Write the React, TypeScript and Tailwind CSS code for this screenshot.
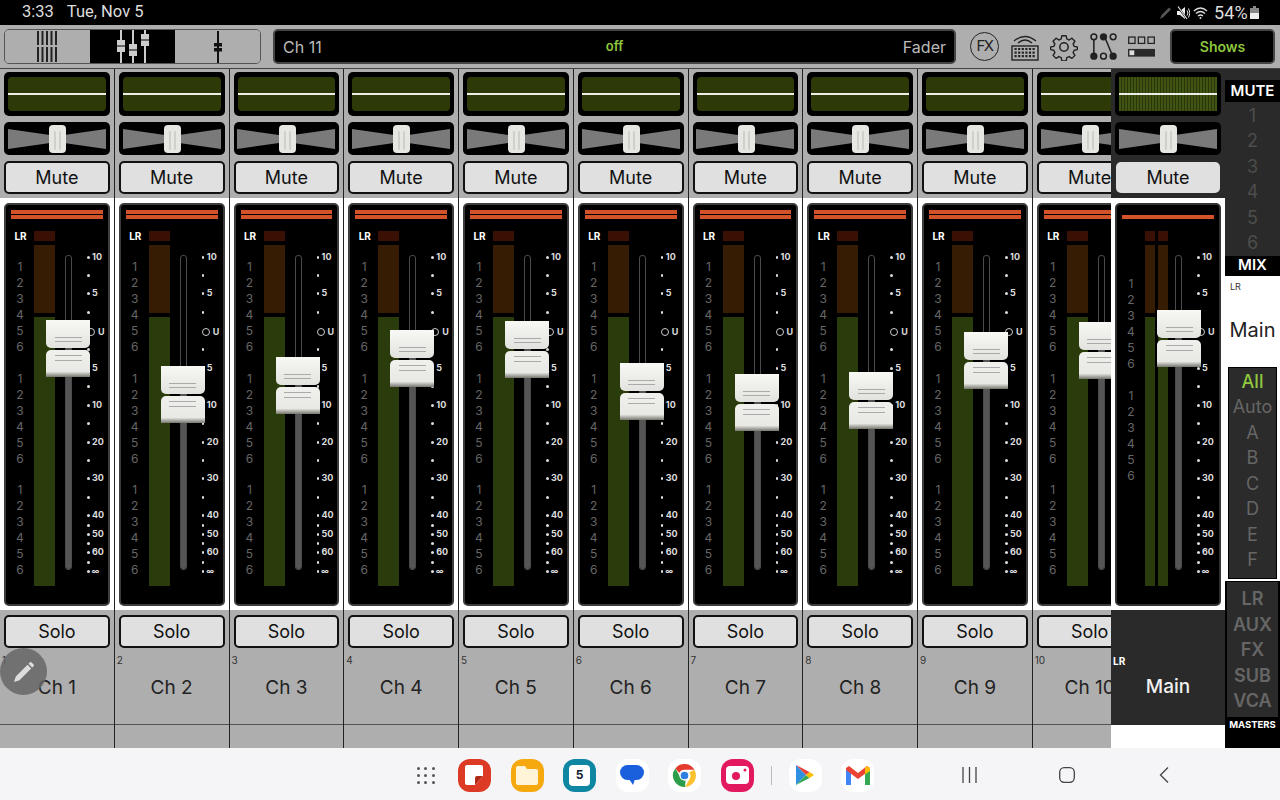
import type { ReactNode } from "react";

// y of the fader cap top for each channel
const channels = [
  { name: "Ch 1", cap: 320 },
  { name: "Ch 2", cap: 366 },
  { name: "Ch 3", cap: 357 },
  { name: "Ch 4", cap: 330 },
  { name: "Ch 5", cap: 321 },
  { name: "Ch 6", cap: 363 },
  { name: "Ch 7", cap: 374 },
  { name: "Ch 8", cap: 372 },
  { name: "Ch 9", cap: 332 },
  { name: "Ch 10", cap: 322 },
];

const scale: { y: number; label?: string }[] = [
  { y: 257, label: "10" },
  { y: 275 },
  { y: 293, label: "5" },
  { y: 312 },
  { y: 332, label: "U" },
  { y: 349 },
  { y: 368, label: "5" },
  { y: 386 },
  { y: 405, label: "10" },
  { y: 423 },
  { y: 442, label: "20" },
  { y: 460 },
  { y: 478, label: "30" },
  { y: 497 },
  { y: 515, label: "40" },
  { y: 525 },
  { y: 534, label: "50" },
  { y: 543 },
  { y: 552, label: "60" },
  { y: 562 },
  { y: 571, label: "∞" },
];

function Scale() {
  return (
    <div className="mt-[21px] flex flex-col">
      {scale.map((s, i) => (
        <div key={i} className="flex items-start" style={{ height: (scale[i + 1]?.y ?? s.y + 10) - s.y }}>
          {s.label === "U" ? (
            <>
              <div className="mt-[1px] h-[8px] w-[8px] shrink-0 rounded-full border border-[#ccc]" />
              <span className="ml-[3px] text-[9px] font-bold leading-[10px] text-[#ddd]">U</span>
            </>
          ) : (
            <>
              <div className="mt-[4px] h-[2.5px] w-[2.5px] shrink-0 rounded-full bg-[#ddd]" />
              {s.label && (
                <span className={s.label === "∞" ? "ml-[2px] text-[8px] font-bold leading-[10px] text-[#ddd]" : "ml-[2.5px] text-[9px] font-bold leading-[10px] text-[#ddd]"}>{s.label}</span>
              )}
            </>
          )}
        </div>
      ))}
    </div>
  );
}

function LevelNumbers({ main }: { main?: boolean }) {
  return (
    <div className={main ? "mt-[35px] flex flex-col gap-[15.5px]" : "mt-[18px] flex flex-col gap-[15.5px]"}>
      {[0, 1, 2].slice(0, main ? 2 : 3).map((g) => (
        <div key={g} className="flex flex-col">
          {[1, 2, 3, 4, 5, 6].map((n) => (
            <span key={n} className="h-[16px] text-center text-[12px] leading-[16px] text-[#666]">{n}</span>
          ))}
        </div>
      ))}
    </div>
  );
}

function FaderCap({ y }: { y: number }) {
  return (
    <div className="absolute left-[40px] flex w-[44px] flex-col gap-[2px]" style={{ top: y - 205 }}>
      <div className="flex h-[28px] flex-col items-center justify-end gap-[3px] rounded-b-[5px] bg-gradient-to-b from-[#f8f8f4] to-[#e2e2de] pb-[6px]">
        <div className="h-px w-[27px] bg-[#aaa]" />
        <div className="h-px w-[27px] bg-[#aaa]" />
      </div>
      <div className="flex h-[27px] flex-col items-center gap-[4px] rounded-t-[5px] bg-gradient-to-b from-[#f0f0ec] via-[#e8e8e4] via-80% to-[#77776f] pt-[5px]">
        <div className="h-px w-[27px] bg-[#aaa]" />
        <div className="h-px w-[27px] bg-[#aaa]" />
      </div>
    </div>
  );
}

function FaderBox({ cap, main }: { cap: number; main?: boolean }) {
  return (
    <div className={main ? "relative h-[403px] overflow-hidden rounded-[5px] border-2 border-[#333] bg-black" : "relative h-[403px] overflow-hidden rounded-[5px] border-2 border-[#3c3c3c] bg-black"}>
      <div className="mx-[5px] mt-[5px] flex h-[9px] flex-col justify-end gap-[1.5px]">
        {!main && <div className="h-[3.5px] bg-[#d4522a]" />}
        <div className="h-[4px] bg-[#d4522a]" />
      </div>
      <div className="mt-[12px] flex">
        <div className="flex w-[28px] shrink-0 flex-col items-center">
          <span className="h-[10px] pl-[1px] text-[10px] font-bold leading-[10px] text-white">{main ? " " : "LR"}</span>
          <LevelNumbers main={main} />
        </div>
        {main ? (
          <div className="flex shrink-0 gap-[3px]">
            {[0, 1].map((i) => (
              <div key={i} className="flex w-[10px] flex-col">
                <div className="h-[10px] bg-[#3a0f04]" />
                <div className="mt-[4px] h-[68px] bg-[#351c02]" />
                <div className="mt-[4px] h-[269px] bg-[#2a3c0c]" />
              </div>
            ))}
          </div>
        ) : (
          <div className="flex w-[21px] shrink-0 flex-col">
            <div className="h-[10px] bg-[#3a0f04]" />
            <div className="mt-[4px] h-[68px] bg-[#351c02]" />
            <div className="mt-[4px] h-[269px] bg-[#2a3c0c]" />
          </div>
        )}
        <div className={main ? "relative ml-[7px] mt-[24px] h-[315px] w-[7px] shrink-0 overflow-hidden rounded-[3px] border border-[#4a4a4a]" : "relative ml-[10px] mt-[24px] h-[315px] w-[7px] shrink-0 overflow-hidden rounded-[3px] border border-[#4a4a4a]"}>
          <div className="absolute inset-x-0 bottom-0 bg-[#555]" style={{ top: cap - 255 }} />
        </div>
        <div className="ml-[15px] shrink-0">
          <Scale />
        </div>
      </div>
      <FaderCap y={cap} />
    </div>
  );
}

function Pan() {
  return (
    <div className="relative flex h-[33px] items-center justify-center rounded-[5px] bg-black">
      <svg width="98" height="22" viewBox="0 0 98 22">
        <polygon points="0,1 49,8 98,1 98,21 49,14 0,21" fill="#7a7a7a" />
      </svg>
      <div className="absolute left-[45px] top-[3px] flex h-[28px] w-[17px] justify-center gap-[3px] rounded-[4px] bg-[#e6e6e2] pt-[6px]">
        <div className="h-[19px] w-[2px] rounded-full bg-[#cfcfcb]" />
        <div className="h-[19px] w-[2px] rounded-full bg-[#cfcfcb]" />
      </div>
    </div>
  );
}

function Strip({ index, name, cap }: { index: number; name: string; cap: number }) {
  return (
    <div className="flex h-[679px] w-[114.75px] shrink-0 flex-col border-r border-[#222]">
      <div className="h-[129px] bg-[#aeaeae] px-[4px] pt-[3px]">
        <div className="flex h-[44px] items-center rounded-[5px] bg-black px-[4px]">
          <div className="flex h-[34px] w-full items-center rounded-[4px] bg-[#2d3a07]">
            <div className="h-[2px] w-full bg-[#eeeee6]" />
          </div>
        </div>
        <div className="mt-[6px]"><Pan /></div>
        <button className="mt-[6px] h-[33px] w-full rounded-[5px] border-2 border-[#111] bg-[#e0e0e0] text-[18px] text-[#111]">Mute</button>
      </div>
      <div className="h-[412px] bg-white px-[4px] pt-[5px]">
        <FaderBox cap={cap} />
      </div>
      <div className="relative flex-1 bg-[#aeaeae]">
        <div className="px-[4px] pt-[5px]">
          <button className="h-[33px] w-full rounded-[5px] border-2 border-[#111] bg-[#e0e0e0] text-[18px] text-[#111]">Solo</button>
        </div>
        <div className="flex h-[77px] flex-col border-b border-[#555]">
          <span className="pl-[2px] pt-[6px] text-[10px] leading-[12px] text-[#333]">{index}</span>
          <span className="mt-[10px] text-center text-[19px] leading-[24px] text-[#222]">{name}</span>
        </div>
      </div>
    </div>
  );
}

function MainStrip() {
  return (
    <div className="flex h-[679px] w-[114px] shrink-0 flex-col">
      <div className="h-[129px] bg-[#2a2a2a] px-[4px] pt-[3px]">
        <div className="flex h-[44px] items-center rounded-[5px] bg-black px-[4px]">
          <div className="flex h-[34px] w-full items-center bg-[repeating-linear-gradient(90deg,#405414_0,#405414_2px,#2a3607_2px,#2a3607_3px)]">
            <div className="h-[2px] w-full bg-[#eeeee6]" />
          </div>
        </div>
        <div className="mt-[6px]"><Pan /></div>
        <button className="ml-[1px] mt-[7px] h-[31px] w-[104px] rounded-[5px] bg-[#e0e0e0] text-[18px] text-[#111]">Mute</button>
      </div>
      <div className="h-[412px] bg-white px-[4px] pt-[5px]">
        <FaderBox cap={310} main />
      </div>
      <div className="flex h-[115px] flex-col bg-[#2a2a2a]">
        <span className="pl-[2px] pt-[45px] text-[10px] font-bold leading-[12px] text-white">LR</span>
        <span className="mt-[8px] text-center text-[19px] font-medium leading-[24px] text-[#f0f0f0]">Main</span>
      </div>
      <div className="flex-1 bg-white" />
    </div>
  );
}

function Sidebar() {
  return (
    <div className="flex h-[679px] w-[55px] shrink-0 flex-col bg-[#2a2a2a]">
      <div className="mt-[11px] h-[22px] bg-black text-center text-[15px] font-semibold leading-[22px] text-white">MUTE</div>
      <div className="flex h-[154px] flex-col pt-[1px]">
        {[1, 2, 3, 4, 5, 6].map((n) => (
          <span key={n} className="h-[25.4px] text-center text-[18px] leading-[25px] text-[#4d4d4d]">{n}</span>
        ))}
      </div>
      <div className="h-[20px] bg-black text-center text-[15px] font-semibold leading-[18px] text-white">MIX</div>
      <div className="flex h-[305px] flex-col bg-white px-[3px]">
        <span className="pl-[2px] pt-[5px] text-[9px] leading-[12px] text-[#333]">LR</span>
        <span className="-mx-[3px] mt-[24px] text-center text-[20px] leading-[26px] text-[#222]">Main</span>
        <div className="mt-[24px] flex h-[212px] flex-col border border-black bg-[#2b2b2b] pt-[0.5px]">
          {["All", "Auto", "A", "B", "C", "D", "E", "F"].map((t, i) => (
            <span key={t} className={i === 0 ? "h-[25.5px] text-center text-[18px] font-medium leading-[25px] text-[#8fc73e]" : "h-[25.5px] text-center text-[18px] leading-[25px] text-[#666]"}>{t}</span>
          ))}
        </div>
      </div>
      <div className="flex flex-1 flex-col bg-black px-[2px] pt-[1px]">
        <div className="flex h-[135px] flex-col bg-[#2b2b2b] pt-[4px]">
          {["LR", "AUX", "FX", "SUB", "VCA"].map((t) => (
            <span key={t} className="h-[25.6px] text-center text-[18px] font-semibold leading-[25px] text-[#666]">{t}</span>
          ))}
        </div>
        <span className="mt-[2px] text-center text-[9.5px] font-bold leading-[12px] text-white">MASTERS</span>
      </div>
    </div>
  );
}

function ViewSwitch() {
  return (
    <div className="flex h-[35px] w-[257px] overflow-hidden rounded-[5px] border border-[#555]">
      <div className="flex flex-1 items-center justify-center bg-[#aeaeae]">
        <svg width="22" height="31" viewBox="0 0 22 31" stroke="#222" strokeWidth="2">
          {[1, 5.5, 10, 14.5, 19].map((x) => (
            <g key={x}>
              <line x1={x} y1="0" x2={x} y2="14" />
              <line x1={x} y1="16" x2={x} y2="31" />
            </g>
          ))}
        </svg>
      </div>
      <div className="flex flex-1 items-center justify-center bg-black">
        <svg width="34" height="33" viewBox="0 0 34 33">
          {[[5, 10], [17, 14], [29, 4]].map(([x, y]) => (
            <g key={x}>
              <line x1={x} y1="0" x2={x} y2="33" stroke="#ccc" strokeWidth="2" />
              <rect x={x - 4} y={y} width="8" height="12" fill="#ccc" />
              <line x1={x - 4} y1={y + 6} x2={x + 4} y2={y + 6} stroke="#000" strokeWidth="1" />
            </g>
          ))}
        </svg>
      </div>
      <div className="flex flex-1 items-center justify-center bg-[#aeaeae]">
        <svg width="10" height="32" viewBox="0 0 10 32">
          <line x1="5" y1="0" x2="5" y2="32" stroke="#111" strokeWidth="2" />
          <rect x="1" y="12" width="8" height="3.5" fill="#111" />
          <rect x="1" y="17" width="8" height="3.5" fill="#111" />
        </svg>
      </div>
    </div>
  );
}

function TopBar() {
  return (
    <div className="flex h-[44px] items-center border-b border-[#444] bg-[#aeaeae] pl-[4px]">
      <ViewSwitch />
      <div className="ml-[12px] grid h-[35px] w-[683px] grid-cols-3 items-center rounded-[5px] border-2 border-[#444] bg-black px-[8px]">
        <span className="text-[16px] text-[#bbb]">Ch 11</span>
        <span className="text-center text-[13px] font-semibold text-[#8fc73e]">off</span>
        <span className="text-right text-[16px] text-[#bbb]">Fader</span>
      </div>
      <div className="ml-[14px] flex items-center gap-[11.5px]">
        <div className="flex h-[29px] w-[29px] items-center justify-center rounded-full border-[1.5px] border-[#222] text-[15px] tracking-[-1.5px] text-[#222]">FX</div>
        <svg width="28" height="30" viewBox="0 0 28 30" fill="none" stroke="#222">
          <path d="M3 9 Q14 0 25 9 M7 11 Q14 5 21 11" strokeWidth="1.4" />
          <rect x="1" y="14" width="26" height="14" strokeWidth="1.4" />
          {[0, 1, 2].map((r) => (
            <line key={r} x1="3.5" y1={17 + r * 3.6} x2="24.5" y2={17 + r * 3.6} strokeWidth="2.2" strokeDasharray="2.2 1.4" />
          ))}
        </svg>
        <svg width="28" height="28" viewBox="0 0 24 24" fill="none" stroke="#222" strokeWidth="1.3" strokeLinejoin="round">
          <path d="M10 1.5h4l.6 3 2.2 1 2.6-1.7 2.8 2.8-1.7 2.6 1 2.2 3 .6v2.4l-3 .6-1 2.2 1.7 2.6-2.8 2.8-2.6-1.7-2.2 1-.6 3h-4l-.6-3-2.2-1-2.6 1.7-2.8-2.8 1.7-2.6-1-2.2-3-.6v-2.4l3-.6 1-2.2-1.7-2.6 2.8-2.8 2.6 1.7 2.2-1z" transform="translate(12 12) scale(.92) translate(-12 -12)" />
          <circle cx="12" cy="12" r="3.6" />
        </svg>
        <svg width="27" height="27" viewBox="0 0 28 28" fill="none" stroke="#222" strokeWidth="1.6">
          <circle cx="4" cy="4" r="3" />
          <circle cx="4" cy="24" r="3" fill="#222" />
          <circle cx="14" cy="4" r="3" fill="#222" />
          <circle cx="14" cy="24" r="3" />
          <circle cx="24" cy="4" r="3" />
          <circle cx="24" cy="24" r="3" fill="#222" />
          <path d="M4 7V21M16 6L22.5 21.5" />
        </svg>
        <svg width="27" height="21" viewBox="0 0 28 21" fill="none">
          <rect x=".7" y=".7" width="6.6" height="6.6" stroke="#222" strokeWidth="1.3" />
          <rect x="10.7" y=".7" width="6.6" height="6.6" stroke="#222" strokeWidth="1.3" />
          <rect x="20.7" y=".7" width="6.6" height="6.6" stroke="#222" strokeWidth="1.3" />
          <rect x="0" y="13" width="28" height="8" fill="#2a2a2a" />
          <rect x="1.5" y="14.5" width="5" height="5" fill="#ddd" />
        </svg>
      </div>
      <div className="ml-[15px] flex h-[35px] w-[105px] items-center justify-center rounded-[5px] border-2 border-[#444] bg-black text-[14px] font-semibold text-[#8fc73e]">Shows</div>
    </div>
  );
}

function StatusBar() {
  return (
    <div className="flex h-[25px] items-center bg-black pl-[22px] pr-[21px] font-['Roboto',sans-serif] text-[16.5px] text-[#ddd]">
      <span>3:33</span>
      <span className="ml-[13px]">Tue, Nov 5</span>
      <div className="ml-auto flex items-center">
        <svg width="13" height="14" viewBox="0 0 13 14" className="mr-[5px]">
          <path d="M1 13 L2.5 9 L10 1.5 L12 3.5 L4.5 11 Z" fill="#555" />
        </svg>
        <svg width="13" height="14" viewBox="0 0 13 14" className="mr-[3px]">
          <path d="M0 5h3l5-4v12l-5-4H0z" fill="#eee" />
          <path d="M1 1L10 13" stroke="#000" strokeWidth="2" />
          <path d="M1 0.5L10 13" stroke="#eee" strokeWidth="1.1" />
          <path d="M10 4.5q2 2.5 0 5M11.5 2.5q3 4.5 0 9" stroke="#eee" strokeWidth="1" fill="none" />
        </svg>
        <svg width="16" height="14" viewBox="0 0 16 14" fill="none" stroke="#ddd" strokeWidth="1.3" className="mr-[5px]">
          <path d="M.8 5Q7.5-1 14 5M3 7.5Q7.5 3.5 12 7.5M5 10Q7.5 8 10 10" />
          <circle cx="7.5" cy="12" r="1" fill="#ddd" stroke="none" />
        </svg>
        <span className="text-[18px] tracking-[0.2px]">54%</span>
        <svg width="9" height="14" viewBox="0 0 9 14" className="ml-[2px]">
          <rect x="3" y="0" width="3" height="2" fill="#888" />
          <rect x="0" y="2" width="9" height="5" fill="#888" />
          <rect x="0" y="7" width="9" height="6" fill="#eee" />
        </svg>
      </div>
    </div>
  );
}

function AppIcon({ bg, children }: { bg: string; children: ReactNode }) {
  return (
    <div className={"flex h-[33px] w-[33px] shrink-0 items-center justify-center rounded-[12px] " + bg}>{children}</div>
  );
}

function NavBar() {
  return (
    <div className="flex h-[52px] items-center bg-[#f5f5f8] pt-[2px]">
      <div className="ml-[417px] grid w-[18px] grid-cols-3 gap-[4px]">
        {Array.from({ length: 9 }).map((_, i) => (
          <div key={i} className="h-[3px] w-[3px] rounded-full bg-[#555]" />
        ))}
      </div>
      <div className="ml-[23px] flex items-center gap-[19.5px]">
        <AppIcon bg="bg-[#dd3a25]">
          <svg width="22" height="22" viewBox="0 0 22 22"><path d="M3 1h14a2 2 0 0 1 2 2v9l-8 9H3a2 2 0 0 1-2-2V3a2 2 0 0 1 2-2z" fill="#fff" /><path d="M19 12h-6a2 2 0 0 0-2 2v7z" fill="#b02a18" /></svg>
        </AppIcon>
        <AppIcon bg="bg-[#f6a80f]">
          <svg width="22" height="19" viewBox="0 0 22 19"><path d="M2 0h7l2 3h9a2 2 0 0 1 2 2v12a2 2 0 0 1-2 2H2a2 2 0 0 1-2-2V2a2 2 0 0 1 2-2z" fill="#fff3d8" /></svg>
        </AppIcon>
        <AppIcon bg="bg-[#0f87a3]">
          <div className="flex h-[21px] w-[21px] items-center justify-center rounded-[4px] bg-white text-[12px] font-bold leading-none text-[#123]">5</div>
        </AppIcon>
        <AppIcon bg="bg-white">
          <svg width="24" height="20" viewBox="0 0 24 20"><rect x="0" y="0" width="24" height="15" rx="7.5" fill="#1a5fdc" /><path d="M9 14h6l-2 6z" fill="#1a5fdc" /></svg>
        </AppIcon>
        <AppIcon bg="bg-white">
          <svg width="25" height="25" viewBox="0 0 24 24">
            <path d="M12 1a11 11 0 0 1 9.53 5.5H12a5.5 5.5 0 0 0-5 3L3.2 5.3A11 11 0 0 1 12 1z" fill="#e33b2e" />
            <path d="M21.53 6.5A11 11 0 0 1 12.5 23l4.3-7.5A5.5 5.5 0 0 0 16.5 9z" fill="#fbc02d" />
            <path d="M12.5 23A11 11 0 0 1 3.2 5.3L7.5 12.8a5.5 5.5 0 0 0 5.5 4z" fill="#2c9e49" />
            <circle cx="12" cy="12" r="4.3" fill="#2f7de1" stroke="#fff" strokeWidth="1.2" />
          </svg>
        </AppIcon>
        <AppIcon bg="bg-[#e2195f]">
          <svg width="23" height="18" viewBox="0 0 23 18"><rect width="23" height="18" rx="4" fill="#fff" /><circle cx="10" cy="10" r="4" fill="#e2195f" /><circle cx="19" cy="4" r="1.5" fill="#e2195f" /></svg>
        </AppIcon>
      </div>
      <div className="ml-[17px] h-[19px] w-px bg-[#bbb]" />
      <div className="ml-[17px] flex items-center gap-[19.5px]">
        <AppIcon bg="bg-white">
          <svg width="20" height="22" viewBox="0 0 20 22">
            <path d="M1 1L11 11 1 21z" fill="#2f8fe0" />
            <path d="M1 1L14.5 8 11 11z" fill="#e8433a" />
            <path d="M1 21L14.5 14 11 11z" fill="#34a853" />
            <path d="M14.5 8L19 11 14.5 14 11 11z" fill="#fbbc05" />
          </svg>
        </AppIcon>
        <AppIcon bg="bg-white">
          <svg width="26" height="20" viewBox="0 0 26 20">
            <path d="M1 3v17h5V8z" fill="#4285f4" />
            <path d="M20 8v12h5V3z" fill="#34a853" />
            <path d="M1 3l3-2 9 7 9-7 3 2v2l-12 9L1 5z" fill="#ea4335" />
            <path d="M22 1l3 2v3l-5 3.5V3z" fill="#fbbc05" />
          </svg>
        </AppIcon>
      </div>
      <svg width="17" height="16" viewBox="0 0 17 16" stroke="#444" strokeWidth="1.3" className="ml-[87px]">
        <path d="M2 0v16M8.5 0v16M15 0v16" />
      </svg>
      <svg width="16" height="16" viewBox="0 0 16 16" fill="none" stroke="#444" strokeWidth="1.3" className="ml-[81px]">
        <rect x=".7" y=".7" width="14.6" height="14.6" rx="4.5" />
      </svg>
      <svg width="10" height="16" viewBox="0 0 10 16" fill="none" stroke="#444" strokeWidth="1.3" className="ml-[84px]">
        <path d="M9 0.5L1.5 8 9 15.5" />
      </svg>
    </div>
  );
}

export default function App() {
  return (
    <div className="h-[800px] w-[1280px] overflow-hidden font-['Inter',sans-serif]">
      <StatusBar />
      <TopBar />
      <div className="relative flex h-[679px]">
        <div className="flex w-[1111px] shrink-0 overflow-hidden">
          {channels.map((c, i) => (
            <Strip key={c.name} index={i + 1} name={c.name} cap={c.cap} />
          ))}
        </div>
        <MainStrip />
        <Sidebar />
        <div className="absolute left-0 top-[579px] flex h-[47px] w-[47px] items-center justify-center rounded-full bg-[#666]/85">
          <svg width="24" height="24" viewBox="0 0 24 24" fill="#ddd">
            <path d="M2 22l1.8-5.5L15.5 4.8l3.7 3.7L7.5 20.2zM16.5 3.8l1.5-1.5a1 1 0 0 1 1.4 0l2.3 2.3a1 1 0 0 1 0 1.4l-1.5 1.5z" />
          </svg>
        </div>
      </div>
      <NavBar />
    </div>
  );
}
